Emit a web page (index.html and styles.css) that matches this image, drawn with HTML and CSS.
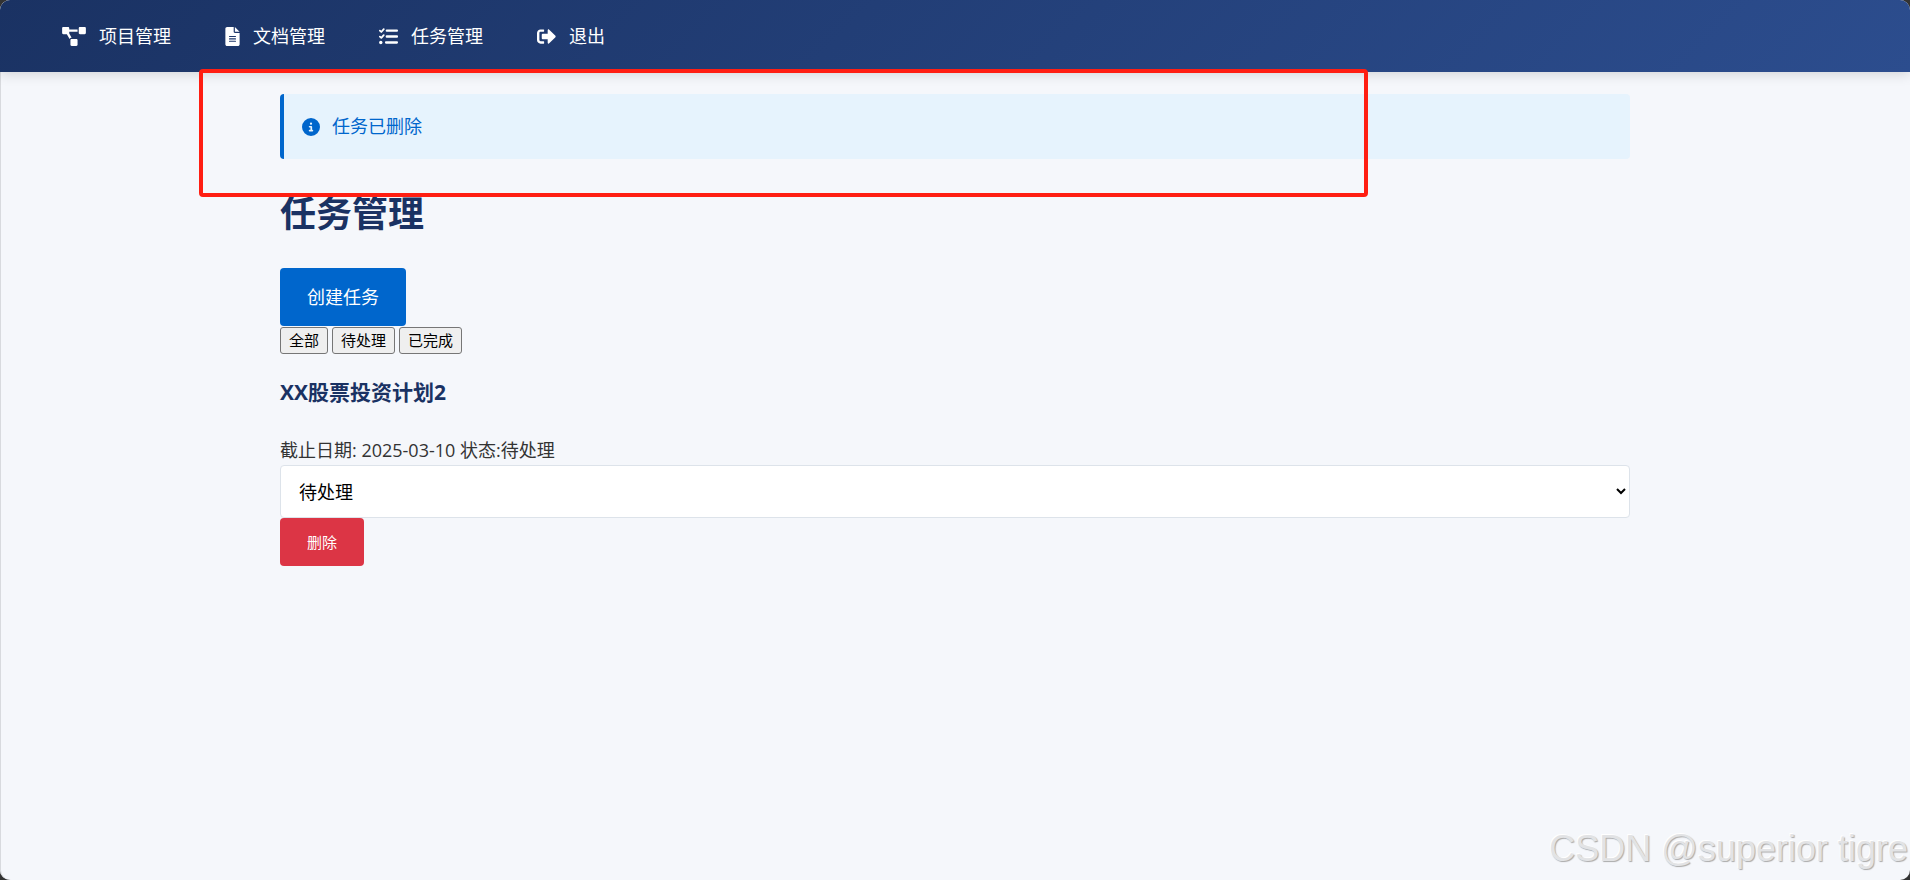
FILE: index.html
```html
<!DOCTYPE html>
<html lang="zh-CN">
<head>
    <meta charset="UTF-8">
    <meta name="viewport" content="width=device-width, initial-scale=1.0">
    <title>任务管理</title>
    <link rel="stylesheet" href="styles.css">
</head>
<body>
    <div class="page">
        <!-- 导航栏 -->
        <nav class="navbar">
            <a href="#projects">
                <svg class="icon" viewBox="0 0 640 512" width="24" height="19"><path d="M384 320H256c-17.67 0-32 14.33-32 32v128c0 17.67 14.33 32 32 32h128c17.67 0 32-14.33 32-32V352c0-17.67-14.33-32-32-32zM192 32c0-17.67-14.33-32-32-32H32C14.33 0 0 14.33 0 32v128c0 17.67 14.33 32 32 32h95.72l73.16 128.04C211.98 300.98 232.4 288 256 288h.28L192 175.51V128h224V64H192V32zM608 0H480c-17.67 0-32 14.33-32 32v128c0 17.67 14.33 32 32 32h128c17.67 0 32-14.33 32-32V32c0-17.67-14.33-32-32-32z"/></svg>
                项目管理
            </a>
            <a href="#documents">
                <svg class="icon" viewBox="0 0 384 512" width="15" height="19"><path d="M48 0C21 0 0 21 0 48v416c0 27 21 48 48 48h288c27 0 48-21 48-48V160H256c-17.700 0-32-14.300-32-32V0H48zm208 0v128h128L256 0zM112 240h160c8.800 0 16 7.200 16 16s-7.200 16-16 16H112c-8.800 0-16-7.200-16-16s7.200-16 16-16zm0 64h160c8.800 0 16 7.200 16 16s-7.200 16-16 16H112c-8.800 0-16-7.200-16-16s7.200-16 16-16zm0 64h160c8.800 0 16 7.200 16 16s-7.200 16-16 16H112c-8.800 0-16-7.200-16-16s7.200-16 16-16z"/></svg>
                文档管理
            </a>
            <a href="#tasks">
                <svg class="icon" viewBox="0 0 512 512" width="19" height="19">
                    <path class="tick" d="M24 98l38 36 66-76M24 258l38 36 66-76"/>
                    <circle cx="48" cy="416" r="46"/>
                    <rect x="180" y="64" width="332" height="64" rx="28"/>
                    <rect x="180" y="224" width="332" height="64" rx="28"/>
                    <rect x="160" y="384" width="352" height="64" rx="28"/>
                </svg>
                任务管理
            </a>
            <a href="#logout">
                <svg class="icon" viewBox="0 0 512 512" width="19" height="19"><path d="M497 273L329 441c-15 15-41 4.500-41-17v-96H152c-13.300 0-24-10.700-24-24v-96c0-13.300 10.700-24 24-24h136V88c0-21.400 25.900-32 41-17l168 168c9.300 9.400 9.300 24.600 0 34zM192 436v-40c0-6.600-5.400-12-12-12H96c-17.700 0-32-14.300-32-32V160c0-17.700 14.300-32 32-32h84c6.600 0 12-5.400 12-12V76c0-6.600-5.400-12-12-12H96c-53 0-96 43-96 96v192c0 53 43 96 96 96h84c6.600 0 12-5.400 12-12z"/></svg>
                退出
            </a>
        </nav>

        <main class="container">
            <!-- 提示消息 -->
            <div class="alert">
                <svg class="icon" viewBox="0 0 512 512" width="18" height="18"><path d="M256 512A256 256 0 1 0 256 0a256 256 0 1 0 0 512zM216 336h24V272H216c-13.300 0-24-10.700-24-24s10.700-24 24-24h48c13.300 0 24 10.700 24 24v88h8c13.300 0 24 10.700 24 24s-10.700 24-24 24H216c-13.300 0-24-10.700-24-24s10.700-24 24-24zm40-208a32 32 0 1 1 0 64 32 32 0 1 1 0-64z"/></svg>
                任务已删除
            </div>

            <h1>任务管理</h1>
            <a class="btn btn-primary" href="#create">创建任务</a>

            <!-- 状态筛选 -->
            <div class="filters">
                <button type="button">全部</button>
                <button type="button">待处理</button>
                <button type="button">已完成</button>
            </div>

            <div class="task">
                <h3>XX股票投资计划2</h3>
                <label for="status">截止日期: 2025-03-10 状态:待处理</label>
                <select id="status">
                    <option selected>待处理</option>
                    <option>已完成</option>
                </select>
                <button type="button" class="btn btn-danger">删除</button>
            </div>

            <div class="highlight"></div>
        </main>

        <div class="watermark">CSDN @superior tigre</div>
    </div>
</body>
</html>
```
FILE: styles.css
```css
* {
    margin: 0;
    padding: 0;
    box-sizing: border-box;
}

body {
    font-family: "Open Sans", "Noto Sans CJK SC", sans-serif;
    font-size: 18px;
    line-height: 29px;
    color: #333;
    background-color: #333;
}

.page {
    position: relative;
    min-height: 100vh;
    background-color: #f5f7fb;
    box-shadow: inset 1px 0 0 #d8dade;
    border-radius: 10px;
    overflow: hidden;
}

.icon {
    fill: currentColor;
    flex-shrink: 0;
}

.tick {
    fill: none;
    stroke: currentColor;
    stroke-width: 48;
    stroke-linecap: round;
    stroke-linejoin: round;
}

/* 导航栏 */
.navbar {
    display: flex;
    gap: 54px;
    height: 72px;
    padding: 0 62px;
    background: linear-gradient(135deg, #1a3263, #2c4d8e);
    box-shadow: 0 2px 12px rgba(0, 0, 0, 0.15);
}

.navbar a {
    display: flex;
    align-items: center;
    gap: 13px;
    color: white;
    text-decoration: none;
}

.container {
    position: relative;
    max-width: 1350px;
    margin: 0 auto;
    padding-top: 22px;
}

/* 提示消息 */
.alert {
    display: flex;
    align-items: center;
    gap: 12px;
    padding: 18px;
    margin-bottom: 26px;
    color: #0066cc;
    background-color: #e6f3fd;
    border-left: 4px solid #0066cc;
    border-radius: 4px;
}

h1 {
    font-size: 36px;
    line-height: 58px;
    color: #1a3263;
    margin-bottom: 25px;
}

h3 {
    font-size: 21px;
    line-height: 34px;
    color: #1a3263;
    margin: 21px 0 27px;
}

.btn {
    display: block;
    width: fit-content;
    padding: 14px 27px;
    color: white;
    border: none;
    border-radius: 4px;
    text-decoration: none;
    cursor: pointer;
}

.btn-primary {
    line-height: 30px;
    background-color: #0066cc;
}

.btn-primary:hover {
    background-color: #0052a3;
}

.filters {
    display: flex;
    gap: 4px;
    margin-top: 1px;
}

.filters button {
    padding: 1px 8px;
    font-family: inherit;
    font-size: 15px;
    line-height: 23px;
    color: black;
    background-color: #efefef;
    border: 1px solid #767676;
    border-radius: 3px;
}

.task label {
    display: block;
}

.task select {
    display: block;
    width: 100%;
    height: 53px;
    padding: 0 14px;
    font-family: inherit;
    font-size: 18px;
    color: black;
    background-color: white;
    border: 1px solid #dde3ea;
    border-radius: 4px;
}

.btn-danger {
    font-family: inherit;
    font-size: 15px;
    line-height: 20px;
    background-color: #dc3545;
}

.btn-danger:hover {
    background-color: #b02a37;
}

/* 红色标注框 */
.highlight {
    position: absolute;
    top: -3px;
    left: -81px;
    right: 262px;
    height: 128px;
    border: 4px solid #ff1e12;
    border-radius: 4px;
    pointer-events: none;
}

.watermark {
    position: absolute;
    right: 2px;
    bottom: 10px;
    font-family: "Liberation Sans", Arial, sans-serif;
    font-size: 36px;
    line-height: 42px;
    color: #e2e3e5;
    text-shadow: 1px 1px 1px #aaa, -1px -1px 0 #fff;
}
```
